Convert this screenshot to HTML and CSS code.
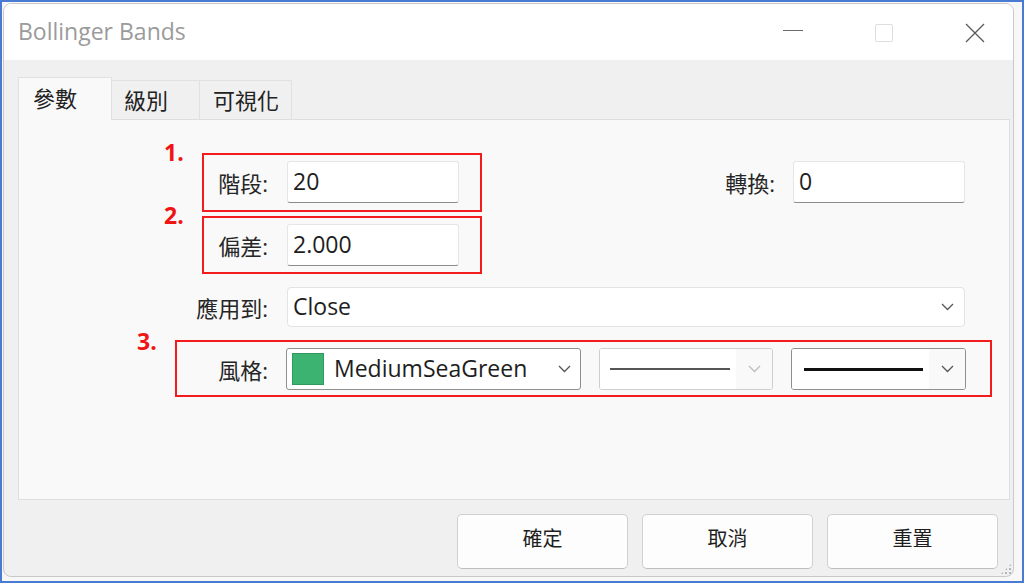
FILE: index.html
```
<!DOCTYPE html>
<html lang="zh-Hant">
<head>
<meta charset="utf-8">
<title>Bollinger Bands</title>
<link rel="stylesheet" href="styles.css">
</head>
<body>
<div class="frame">
  <div class="window">
    <div class="titlebar">
      <div class="title">Bollinger Bands</div>
      <div class="controls">
        <span class="ctl-min"></span>
        <span class="ctl-max"></span>
        <svg class="ctl-close" width="20" height="20" viewBox="0 0 20 20"><path d="M1 1 L19 19 M19 1 L1 19" stroke="#5a5a5a" stroke-width="1.3" fill="none"/></svg>
      </div>
    </div>
    <div class="content">
      <div class="tabs">
        <div class="tab tab-active">參數</div>
        <div class="tab tab-2">級別</div>
        <div class="tab tab-3">可視化</div>
      </div>
      <div class="panel">
        <div class="row row-1">
          <div class="mark mark-a">
            <span class="num">1.</span>
            <span class="label lbl-a">階段:</span>
            <div class="input">20</div>
          </div>
          <div class="side">
            <span class="label">轉換:</span>
            <div class="input">0</div>
          </div>
        </div>
        <div class="row row-2">
          <div class="mark mark-a">
            <span class="num">2.</span>
            <span class="label lbl-a">偏差:</span>
            <div class="input">2.000</div>
          </div>
        </div>
        <div class="row row-3">
          <span class="label lbl-c">應用到:</span>
          <div class="select select-wide">
            <span class="sel-text">Close</span>
            <svg class="chev" width="13" height="8" viewBox="0 0 13 8"><polyline points="1,1 6.5,6.5 12,1" fill="none" stroke="#555" stroke-width="1.3"/></svg>
          </div>
        </div>
        <div class="row row-4">
          <div class="mark mark-b">
            <span class="num num-3">3.</span>
            <span class="label lbl-b">風格:</span>
            <div class="select select-color">
              <span class="swatch"></span>
              <span class="sel-text">MediumSeaGreen</span>
              <svg class="chev" width="13" height="8" viewBox="0 0 13 8"><polyline points="1,1 6.5,6.5 12,1" fill="none" stroke="#555" stroke-width="1.3"/></svg>
            </div>
            <div class="select select-line disabled">
              <span class="line-area"><span class="line thin"></span></span>
              <span class="drop"><svg width="13" height="8" viewBox="0 0 13 8"><polyline points="1,1 6.5,6.5 12,1" fill="none" stroke="#bdbdbd" stroke-width="1.3"/></svg></span>
            </div>
            <div class="select select-line">
              <span class="line-area"><span class="line thick"></span></span>
              <span class="drop"><svg width="13" height="8" viewBox="0 0 13 8"><polyline points="1,1 6.5,6.5 12,1" fill="none" stroke="#555" stroke-width="1.3"/></svg></span>
            </div>
          </div>
        </div>
      </div>
      <div class="buttons">
        <button class="btn">確定</button>
        <button class="btn">取消</button>
        <button class="btn">重置</button>
      </div>
    </div>
    <div class="grip"></div>
  </div>
</div>
</body>
</html>
```
FILE: styles.css
```
* { box-sizing: border-box; }
html, body { margin: 0; padding: 0; background: #ffffff; }
body {
  width: 1024px;
  height: 583px;
  overflow: hidden;
  font-family: "Open Sans", "Noto Sans CJK TC", sans-serif;
}
.frame {
  width: 1024px;
  height: 583px;
  border: 2px solid #4a7bd3;
  background: #f7f7f7;
  padding: 1px 8px 4px 1px;
}
.window {
  position: relative;
  width: 100%;
  height: 100%;
  border: 1px solid #c9c9c9;
  border-radius: 8px;
  background: #f0f0f0;
  display: flex;
  flex-direction: column;
  overflow: hidden;
}
.titlebar {
  height: 56px;
  background: #ffffff;
  display: flex;
  align-items: center;
  padding-left: 14px;
  padding-right: 28px;
  flex: none;
}
.title {
  font-size: 23px;
  color: #9b9b9b;
  margin-top: -3px;
}
.controls {
  margin-left: auto;
  display: flex;
  align-items: center;
  gap: 72px;
  margin-top: 1px;
}
.ctl-min {
  display: block;
  width: 20px;
  height: 1px;
  background: #6a6a6a;
  margin-top: -4px;
}
.ctl-max {
  display: block;
  width: 18px;
  height: 18px;
  border: 1px solid #dedede;
  border-radius: 2px;
}
.ctl-close { display: block; }
.content {
  flex: 1;
  display: flex;
  flex-direction: column;
  padding: 17px 3px 0 14px;
}
.tabs {
  display: flex;
  align-items: flex-end;
  height: 42px;
  position: relative;
  z-index: 1;
}
.tab {
  font-size: 22px;
  color: #222;
  background: #f0f0f0;
  border: 1px solid #e1e1e1;
  border-bottom: none;
  height: 39px;
  line-height: 38px;
  margin-left: -1px;
}
.tab-active {
  background: #f9f9f9;
  height: 43px;
  margin-bottom: -1px;
  margin-left: 0;
  width: 94px;
  padding-left: 14px;
  line-height: 40px;
}
.tab-2 { width: 89px; padding-left: 12px; }
.tab-3 { width: 93px; padding-left: 13px; }
.panel {
  height: 381px;
  background: #f9f9f9;
  border: 1px solid #dedede;
  display: flex;
  flex-direction: column;
  align-items: flex-start;
  padding-top: 33px;
}
.row {
  display: flex;
  align-items: flex-start;
}
.row-1 { margin-left: 183px; width: calc(100% - 183px); padding-right: 44px; }
.row-2 { margin-top: 4px; margin-left: 183px; }
.row-3 { margin-top: 13px; align-items: center; }
.row-4 { margin-top: 13px; margin-left: 156px; }
.mark {
  position: relative;
  border: 2px solid #f21c1c;
  display: flex;
  align-items: center;
}
.mark-a { width: 280px; padding: 6px 21px 7px 0; }
.row-2 .mark-a { padding-bottom: 6px; }
.mark-b { width: 817px; padding: 6px 24px 5px 0; gap: 18px; }
.num {
  position: absolute;
  left: -40px;
  top: -16px;
  font-size: 23px;
  font-weight: 700;
  color: #f01414;
  line-height: 26px;
}
.num-3 { left: -40px; top: -14px; }
.label {
  font-size: 22px;
  color: #262626;
  text-align: right;
  white-space: nowrap;
}
.lbl-a { width: 64px; margin-right: 19px; }
.lbl-b { width: 91px; }
.lbl-c { width: 249px; margin-right: 19px; }
.side {
  margin-left: auto;
  margin-top: 8px;
  display: flex;
  align-items: center;
  gap: 18px;
}
.input {
  width: 172px;
  height: 42px;
  background: #ffffff;
  border: 1px solid #e6e6e6;
  border-bottom: 1px solid #8c8c8c;
  border-radius: 3px;
  font-size: 23px;
  color: #1e1e1e;
  line-height: 38px;
  padding-left: 5px;
}
.select {
  display: flex;
  align-items: center;
  background: #ffffff;
  border-radius: 4px;
  height: 42px;
}
.select-wide {
  width: 678px;
  height: 40px;
  border: 1px solid #e3e3e3;
  padding: 0 10px 0 5px;
}
.sel-text {
  font-size: 23px;
  color: #1e1e1e;
  white-space: nowrap;
  margin-top: -2px;
}
.chev { margin-left: auto; display: block; }
.select-color {
  width: 295px;
  border: 1px solid #8f8f8f;
  border-radius: 3px;
  padding: 0 9px 0 5px;
}
.swatch {
  width: 32px;
  height: 32px;
  background: #3cb371;
  border: 1px solid #2f9a5e;
  margin-right: 10px;
  flex: none;
}
.select-line {
  width: 175px;
  border: 1px solid #8f8f8f;
  border-radius: 3px;
  overflow: hidden;
}
.select-line.disabled { width: 174px; border-color: #cfcfcf; }
.line-area {
  flex: 1;
  height: 100%;
  display: flex;
  align-items: center;
  padding-left: 10px;
  background: #ffffff;
}
.line { display: block; width: 120px; }
.line.thin { height: 2px; background: #555555; }
.line.thick { height: 3px; background: #111111; width: 119px; margin-left: 2px; }
.drop {
  width: 36px;
  height: 100%;
  display: flex;
  align-items: center;
  justify-content: center;
  background: #f9f9f9;
}
.drop svg { display: block; }
.buttons {
  display: flex;
  justify-content: flex-end;
  gap: 14px;
  margin-top: 14px;
  padding-right: 12px;
}
.btn {
  width: 171px;
  height: 55px;
  background: #fdfdfd;
  border: 1px solid #d0d0d0;
  border-bottom-color: #bdbdbd;
  border-radius: 5px;
  font-family: "Noto Sans CJK TC", sans-serif;
  font-size: 20px;
  line-height: 1;
  color: #1e1e1e;
  padding: 0 0 7px 0;
}
.grip {
  position: absolute;
  right: 1px;
  bottom: 1px;
  width: 12px;
  height: 12px;
  background-image: radial-gradient(circle, #b5b5b5 1.2px, transparent 1.4px);
  background-size: 4px 4px;
  clip-path: polygon(100% 0, 100% 100%, 0 100%);
}
```
